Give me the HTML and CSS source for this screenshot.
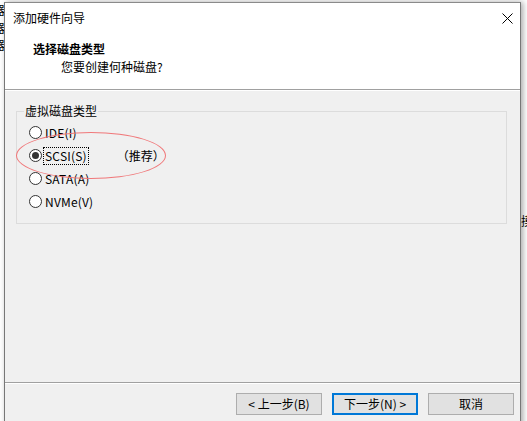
FILE: index.html
```html
<!DOCTYPE html>
<html lang="zh-CN">
<head>
<meta charset="utf-8">
<title>添加硬件向导</title>
<link rel="stylesheet" href="styles.css">
</head>
<body>
<div class="desktop">
  <div class="behind-left">器<br>器<br>器</div>
  <div class="behind-right">摸</div>

  <div class="window">
    <div class="titlebar">
      <span class="title">添加硬件向导</span>
      <svg class="close" width="11" height="11" viewBox="0 0 11 11"><path d="M0.5 0.5 L10.5 10.5 M10.5 0.5 L0.5 10.5" stroke="#000" stroke-width="1"/></svg>
    </div>
    <div class="header">
      <div class="h-title">选择磁盘类型</div>
      <div class="h-sub">您要创建何种磁盘?</div>
    </div>
    <div class="sep"></div>
    <div class="body">
      <fieldset class="group">
        <legend>虚拟磁盘类型</legend>
        <label class="row"><span class="radio"></span><span class="txt">IDE(I)</span></label>
        <label class="row"><span class="radio on"></span><span class="txt focus">SCSI(S)</span><span class="rec">（推荐）</span></label>
        <label class="row"><span class="radio"></span><span class="txt">SATA(A)</span></label>
        <label class="row"><span class="radio"></span><span class="txt">NVMe(V)</span></label>
      </fieldset>
      <div class="mark"></div>
    </div>
    <div class="sep"></div>
    <div class="footer">
      <button class="btn">&lt; 上一步(B)</button>
      <button class="btn default">下一步(N) &gt;</button>
      <button class="btn cancel">取消</button>
    </div>
  </div>
</div>
</body>
</html>
```

FILE: styles.css
```css
* { box-sizing: border-box; }
html, body {
  margin: 0;
  padding: 0;
  width: 527px;
  height: 421px;
  overflow: hidden;
  background: #ffffff;
  font-family: "Noto Sans CJK SC", "Microsoft YaHei", sans-serif;
  font-size: 12px;
  color: #000;
}
.desktop {
  position: relative;
  width: 527px;
  height: 421px;
  overflow: hidden;
  background: #fff;
}
.behind-left {
  position: absolute;
  left: -7px;
  top: 1px;
  font-size: 12px;
  line-height: 17.5px;
  color: #000;
}
.behind-right {
  position: absolute;
  left: 521px;
  top: 213px;
  font-size: 12px;
  line-height: 16px;
}
.window {
  position: absolute;
  left: 4px;
  top: 2px;
  width: 517px;
  height: 425px;
  border: 1px solid #777;
  border-top-color: #8a8a8a;
  background: #f0f0f0;
  box-shadow: 2px 0 6px rgba(0,0,0,0.35);
  display: flex;
  flex-direction: column;
}
.titlebar {
  height: 31px;
  background: #fff;
  display: flex;
  align-items: center;
  justify-content: space-between;
  padding: 0 7px 0 8px;
}
.title {
  line-height: 16px;
  margin-top: -1px;
}
.close { margin-top: -1px; }
.header {
  background: #fff;
  height: 55px;
  padding: 7px 0 0 28px;
}
.h-title {
  font-weight: bold;
  line-height: 16px;
}
.h-sub {
  line-height: 16px;
  padding-left: 28px;
  margin-top: 2px;
}
.sep {
  height: 2px;
  border-top: 1px solid #a0a0a0;
  border-bottom: 1px solid #fff;
}
.body {
  position: relative;
  flex: 0 0 291px;
  padding: 12px 13px 0 11px;
}
.group {
  margin: 0;
  border: 1px solid #dcdcdc;
  padding: 2px 0 10px 12px;
  min-width: 0;
}
.group legend {
  padding: 0 1px;
  margin-left: -5px;
  line-height: 16px;
}
.row {
  display: flex;
  align-items: center;
  height: 23px;
}
.radio {
  width: 13px;
  height: 13px;
  border: 1px solid #333;
  border-radius: 50%;
  background: #fff;
  display: flex;
  align-items: center;
  justify-content: center;
  margin-right: 1px;
}
.radio.on::after {
  content: "";
  width: 7px;
  height: 7px;
  border-radius: 50%;
  background: #333;
}
.txt {
  line-height: 16px;
  padding: 0 1px;
  border: 1px dotted transparent;
  letter-spacing: 0.2px;
}
.txt.focus { border-color: #000; }
.rec { margin-left: 28px; line-height: 16px; }
.mark {
  position: absolute;
  left: 11px;
  top: 41px;
  width: 150px;
  height: 47px;
  border: 1px solid #f0787a;
  border-radius: 50%;
}
.footer {
  display: flex;
  justify-content: flex-end;
  gap: 10px;
  padding: 9px 6px 0 0;
}
.btn {
  width: 86px;
  height: 22px;
  background: #e1e1e1;
  border: 1px solid #adadad;
  font-family: inherit;
  font-size: 12px;
  color: #000;
  padding: 0;
  line-height: 18px;
}
.btn.default {
  border: 2px solid #0078d7;
}
```
